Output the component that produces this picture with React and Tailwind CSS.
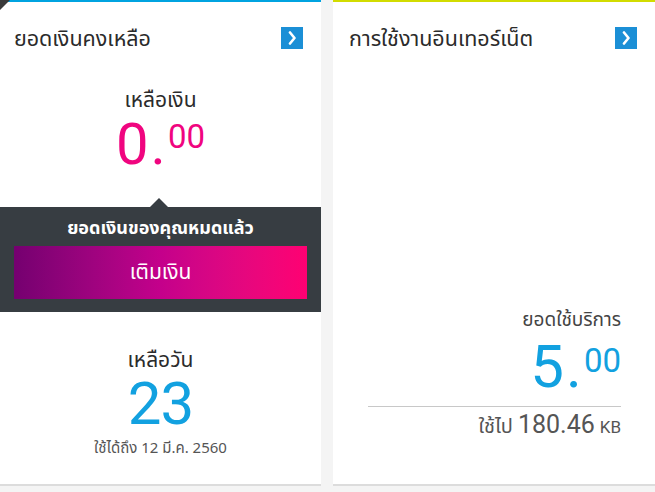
import React from 'react'

const thai = { fontFamily: '"Noto Sans Thai", "Noto Sans", "Liberation Sans", sans-serif' }
const nums = { fontFamily: 'Roboto, "Noto Sans", sans-serif' }

function Chevron() {
    return (
        <div className="w-[22px] h-[22px] bg-[#1b8fd6] flex items-center justify-center">
            <svg width="10" height="14" viewBox="0 0 10 14">
                <path d="M3 1.5 L7.5 7 L3 12.5" fill="none" stroke="#fff" strokeWidth="2.6" strokeLinecap="round" strokeLinejoin="round" />
            </svg>
        </div>
    )
}

function Header({ title, padLeft }) {
    return (
        <div className={`mt-[25px] h-[22px] flex items-center justify-between pr-[18px] ${padLeft}`}>
            <h2 className="mt-[3px] text-[21.5px] leading-[24px] text-[#2b2b2b]" style={thai}>{title}</h2>
            <Chevron />
        </div>
    )
}

function BalanceCard() {
    return (
        <div className="relative w-[321px] h-[486px] bg-white border-t-2 border-t-[#00a3e0] border-b-2 border-b-[#dcdcdc] flex flex-col">
            <div className="absolute -top-[2px] left-0 w-0 h-0 border-t-[10px] border-t-[#3a3a3a] border-r-[10px] border-r-transparent" />
            <Header title="ยอดเงินคงเหลือ" padLeft="pl-[14px]" />

            <p className="mt-[40px] text-center text-[21px] leading-[24px] text-[#2b2b2b]" style={thai}>เหลือเงิน</p>
            <div className="mt-[2px] flex justify-center items-start text-[#f0057f]" style={nums}>
                <span className="text-[58px] leading-[58px]">0</span>
                <span className="text-[58px] leading-[58px] mx-[2px]">.</span>
                <span className="text-[33px] leading-[33px] mt-[5px]">00</span>
            </div>

            <div className="relative mt-[34px] bg-[#373d42] px-[14px] pt-[11px] pb-[13px]">
                <div className="absolute -top-[9px] left-[150px] w-0 h-0 border-l-[9px] border-l-transparent border-r-[9px] border-r-transparent border-b-[9px] border-b-[#373d42]" />
                <p className="text-center text-white font-bold text-[18px] leading-[22px]" style={thai}>ยอดเงินของคุณหมดแล้ว</p>
                <button className="mt-[6px] w-full h-[53px] bg-linear-to-r from-[#750070] via-[#c4008b] to-[#ff0072] text-white text-[21px]" style={thai}>
                    เติมเงิน
                </button>
            </div>

            <p className="mt-[37px] text-center text-[21px] leading-[24px] text-[#2b2b2b]" style={thai}>เหลือวัน</p>
            <p className="mt-[2px] text-center text-[60px] leading-[58px] tracking-[-1px] text-[#12a1e0]" style={nums}>23</p>
            <p className="mt-[6px] text-center text-[15px] leading-[20px] text-[#555]" style={thai}>ใช้ได้ถึง 12 มี.ค. 2560</p>
        </div>
    )
}

function InternetCard() {
    return (
        <div className="flex-1 h-[486px] bg-white border-t-2 border-t-[#d2dc00] border-b-2 border-b-[#dcdcdc] flex flex-col">
            <Header title="การใช้งานอินเทอร์เน็ต" padLeft="pl-[16px]" />

            <div className="mt-[260px] pr-[34px] flex flex-col items-end">
                <p className="text-[19px] leading-[24px] text-[#444]" style={thai}>ยอดใช้บริการ</p>
                <div className="mt-[3px] flex items-start text-[#12a1e0]" style={nums}>
                    <span className="text-[60px] leading-[62px]">5</span>
                    <span className="text-[60px] leading-[62px] mx-[2px]">.</span>
                    <span className="text-[33px] leading-[33px] mt-[8px]">00</span>
                </div>
            </div>
            <div className="mt-[8px] ml-[35px] mr-[34px] border-t border-[#c8c8c8]" />
            <div className="mt-[3px] pr-[34px] flex items-baseline justify-end gap-[5px] text-[#555]">
                <span className="text-[20px]" style={thai}>ใช้ไป</span>
                <span className="text-[25px] leading-[30px]" style={nums}>180.46</span>
                <span className="text-[17px]" style={nums}>KB</span>
            </div>
        </div>
    )
}

export default function App() {
    return (
        <div className="w-[655px] h-[492px] bg-[#f4f4f4] flex gap-[12px] overflow-hidden">
            <BalanceCard />
            <InternetCard />
        </div>
    )
}
